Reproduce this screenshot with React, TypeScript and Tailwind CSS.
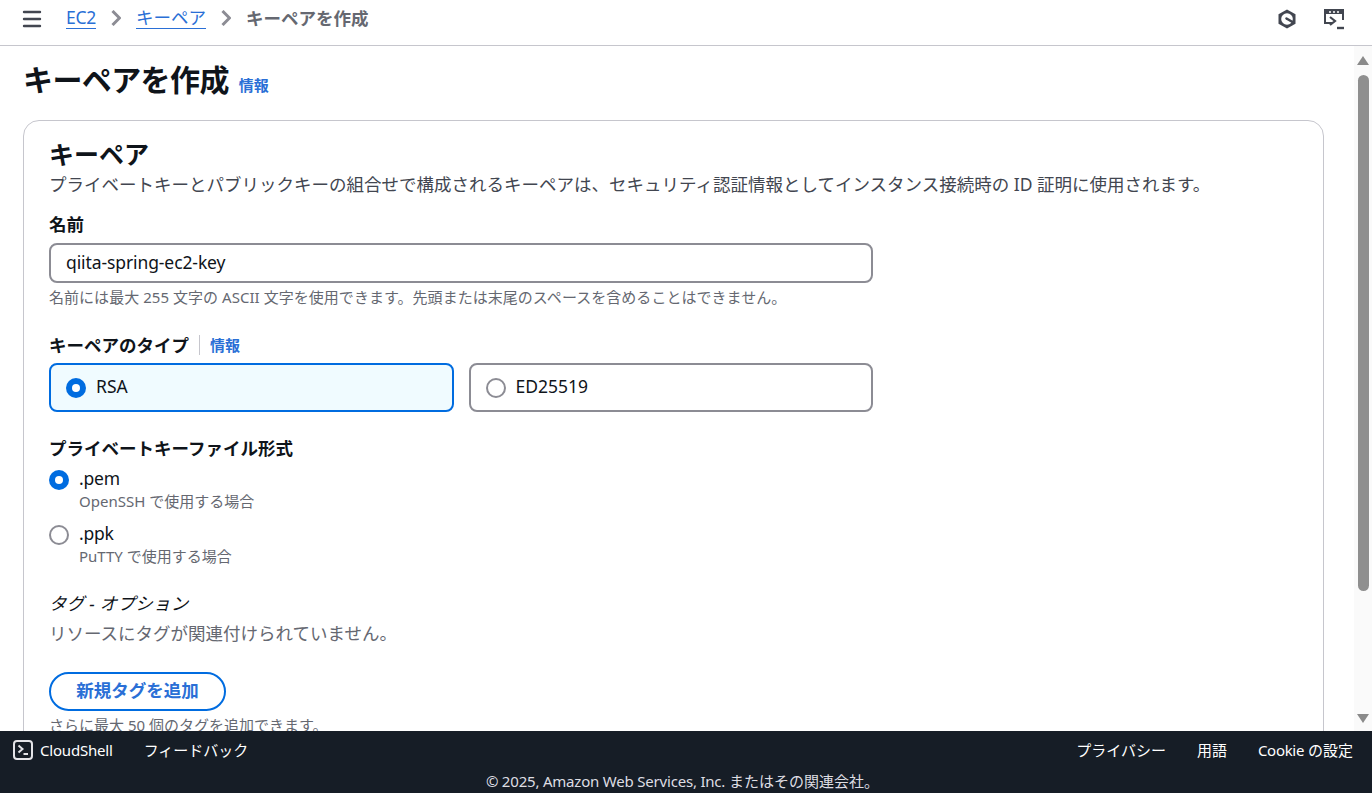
import React from 'react';
import { Menu } from 'lucide-react';

const Info = ({ className }: { className?: string }) => (
  <a className={`text-[15px] font-bold text-[#2a6fd6] ${className ?? ''}`}>情報</a>
);

const Radio = ({ checked }: { checked?: boolean }) =>
  checked ? (
    <span className="flex h-5 w-5 shrink-0 items-center justify-center rounded-full bg-[#006ce0]">
      <span className="h-2 w-2 rounded-full bg-white" />
    </span>
  ) : (
    <span className="block h-5 w-5 shrink-0 rounded-full border-2 border-[#8c8c94] bg-white" />
  );

const Crumb = () => (
  <svg viewBox="0 0 10 16" className="mx-[15px] h-4 w-[10px] text-[#8c8c94]" fill="none" stroke="currentColor" strokeWidth="3">
    <path d="M1.5 1 8.5 8l-7 7" />
  </svg>
);

const App = () => {
  return (
    <div className="flex h-[793px] w-[1372px] flex-col overflow-hidden bg-white font-['Noto_Sans','Noto_Sans_CJK_JP',sans-serif] text-[#0f141a]">
      <header className="flex h-[46px] shrink-0 items-center border-b border-[#c6c6cd] pb-[8px] pl-[20px] pr-[27px]">
        <Menu className="h-6 w-6 text-[#424650]" strokeWidth={2.4} />
        <nav className="ml-[22px] flex items-center pb-[2px] text-[17.5px] leading-[22px]">
          <a className="border-b border-[#2a6fd6] tracking-[-0.3px] text-[#2a6fd6]">EC2</a>
          <Crumb />
          <a className="border-b border-[#2a6fd6] text-[#2a6fd6]">キーペア</a>
          <Crumb />
          <span className="font-bold text-[#656871]">キーペアを作成</span>
        </nav>
        <div className="ml-auto flex items-center gap-[26px]">
          <svg viewBox="0 0 20 20" className="h-5 w-5 text-[#424650]">
            <path d="M10 .5 18.5 5.2v9.6L10 19.5l-8.5-4.7V5.2z" fill="currentColor" />
            <circle cx="10" cy="10" r="5.8" fill="#fff" />
            <path d="M9.5 9.5l6 3.5" fill="none" stroke="currentColor" strokeWidth="2.6" strokeLinecap="round" />
          </svg>
          <svg viewBox="0 0 22 22" className="h-[22px] w-[22px] text-[#424650]" fill="none">
            <path d="M9 15H2V2h18v10" stroke="currentColor" strokeWidth="2" />
            <path d="M2 3h18v3H2z" fill="currentColor" />
            <path d="M6 4h2M10 4h2M14 4h2" stroke="#fff" strokeWidth="1.4" />
            <path d="M7 9l5 4-5 4" stroke="currentColor" strokeWidth="2.2" />
            <path d="M14 20h7" stroke="currentColor" strokeWidth="2.4" />
          </svg>
        </div>
      </header>

      <div className="flex min-h-0 flex-1">
        <main className="min-w-0 flex-1 overflow-hidden pl-[23px] pr-[30px]">
          <div className="flex h-[74px] items-center pb-[6px]">
            <h1 className="text-[30px] font-bold leading-9 tracking-[-0.6px]">キーペアを作成</h1>
            <Info className="ml-[10px] mt-[10px]" />
          </div>

          <section className="h-[700px] rounded-2xl border border-[#c6c6cd] px-[25px] pt-[18px]">
            <h2 className="text-[25px] font-bold leading-[30px]">キーペア</h2>
            <p className="mt-[3px] text-[17.5px] leading-[24px] text-[#424650]">
              プライベートキーとパブリックキーの組合せで構成されるキーペアは、セキュリティ認証情報としてインスタンス接続時の ID 証明に使用されます。
            </p>

            <label className="mt-[16px] block text-[17.5px] font-bold leading-[24px]">名前</label>
            <div className="mt-[7px] flex h-10 w-[824px] items-center rounded-lg border-2 border-[#8c8c94] pb-[2px] pl-[15px] text-[17.5px] tracking-[-0.1px]">
              qiita-spring-ec2-key
            </div>
            <p className="mt-[4px] text-[15px] leading-[20px] tracking-[0.04px] text-[#656871]">
              名前には最大 255 文字の ASCII 文字を使用できます。先頭または末尾のスペースを含めることはできません。
            </p>

            <div className="mt-[26px] flex h-6 items-center text-[17.5px] leading-[24px]">
              <span className="font-bold">キーペアのタイプ</span>
              <span className="mx-[10px] h-5 w-px bg-[#c6c6cd]" />
              <Info />
            </div>
            <div className="mt-[6px] flex w-[824px] gap-[15px]">
              <div className="flex h-[49px] flex-1 items-center gap-[10px] rounded-lg border-2 border-[#006ce0] bg-[#f0fbff] pl-[15px] text-[17.5px]">
                <Radio checked />
                <span className="pb-[2px]">RSA</span>
              </div>
              <div className="flex h-[49px] flex-1 items-center gap-[10px] rounded-lg border-2 border-[#8c8c94] pl-[15px] text-[17.5px]">
                <Radio />
                <span className="pb-[2px]">ED25519</span>
              </div>
            </div>

            <div className="mt-[24px] text-[17.5px] font-bold leading-[24px]">プライベートキーファイル形式</div>
            <div className="mt-[6px] flex gap-[10px]">
              <div className="mt-[4px]"><Radio checked /></div>
              <div>
                <div className="text-[17.5px] leading-[24px] tracking-[-0.2px]">.pem</div>
                <div className="mt-px text-[15px] leading-[20px] text-[#656871]">OpenSSH で使用する場合</div>
              </div>
            </div>
            <div className="mt-[10px] flex gap-[10px]">
              <div className="mt-[4px]"><Radio /></div>
              <div>
                <div className="text-[17.5px] leading-[24px] tracking-[-0.2px]">.ppk</div>
                <div className="mt-px text-[15px] leading-[20px] text-[#656871]">PuTTY で使用する場合</div>
              </div>
            </div>

            <div className="mt-[25px] text-[17.5px] italic leading-[24px] tracking-[0.25px]">タグ - オプション</div>
            <p className="mt-[6px] text-[17.5px] leading-[24px] text-[#656871]">リソースにタグが関連付けられていません。</p>
            <button className="mt-[27px] block h-[39px] w-[177px] rounded-full border-2 border-[#006ce0] pb-[2px] text-[17.5px] font-bold text-[#2a6fd6]">
              新規タグを追加
            </button>
            <p className="mt-[4px] text-[15px] leading-[20px] text-[#656871]">さらに最大 50 個のタグを追加できます。</p>
          </section>
        </main>

        <div className="flex w-[18px] shrink-0 flex-col items-center bg-[#fafafa] pt-[10px] pb-[8px]">
          <span className="h-0 w-0 border-x-[6px] border-b-[9px] border-x-transparent border-b-[#8a8a8a]" />
          <span className="mt-[10px] h-[516px] w-[11px] rounded-full bg-[#8f8f8f]" />
          <span className="mt-auto h-0 w-0 border-x-[6px] border-t-[9px] border-x-transparent border-t-[#8a8a8a]" />
        </div>
      </div>

      <footer className="h-[62px] shrink-0 bg-[#161d26] text-white">
        <div className="flex h-[38px] items-center pl-[13px] pr-[19px] text-[15px]">
          <svg viewBox="0 0 20 20" className="h-5 w-5" fill="none" stroke="#e4e4e8" strokeWidth="2">
            <rect x="1" y="1" width="18" height="18" rx="3" />
            <path d="M5.5 5.5l4 3.5-4 3.5M10.5 14h4.5" />
          </svg>
          <span className="ml-[7px] tracking-[-0.2px]">CloudShell</span>
          <span className="ml-[31px]">フィードバック</span>
          <div className="ml-auto flex gap-[31px]">
            <span>プライバシー</span>
            <span>用語</span>
            <span><span className="tracking-[-0.3px]">Cookie</span> の設定</span>
          </div>
        </div>
        <div className="mt-[2px] pr-[7px] text-center text-[15px] leading-[20px] text-[#dedee3]">
          <span className="tracking-[-0.2px]">© 2025, Amazon Web Services, Inc.</span> またはその関連会社。
        </div>
      </footer>
    </div>
  );
};

export default App;
